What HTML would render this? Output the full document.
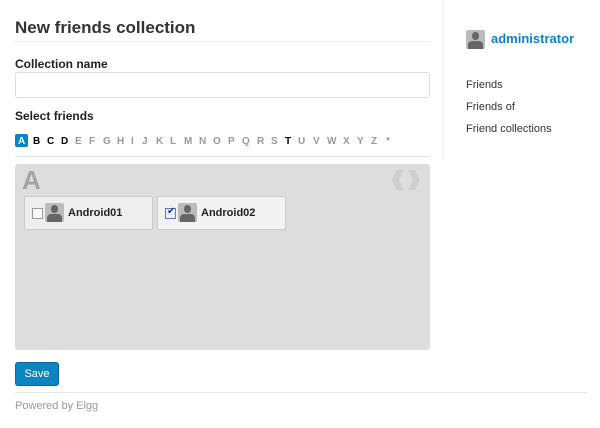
<!DOCTYPE html><html><head><style>
body{margin:0;width:600px;height:428px;background:#fff;font-family:"Liberation Sans",sans-serif;position:relative;overflow:hidden}
.a{position:absolute;white-space:nowrap}
.l{position:absolute;top:136px;font-size:10px;font-weight:bold;color:#999}
.av{position:absolute;background:#bbb;overflow:hidden;border-radius:2px}
.av:before{content:"";position:absolute;left:30%;top:12%;width:40%;height:42%;background:#666;border-radius:45%}
.av:after{content:"";position:absolute;left:12%;top:58%;width:76%;height:60%;background:#666;border-radius:30% 30% 0 0}
.card{position:absolute;top:196px;width:127px;height:32px;background:#eee;border:1px solid #ccc;border-radius:2px}
.cb{position:absolute;left:7px;top:11px;width:9px;height:9px;border:1px solid #999;background:#f8f8f8}
</style></head><body>
<div class="a" style="left:15px;top:18px;font-size:17px;font-weight:bold;color:#333">New friends collection</div>
<div class="a" style="left:15px;top:41px;width:415px;height:1px;background:#ebebeb"></div>
<div class="a" style="left:15px;top:57px;font-size:12px;font-weight:bold;color:#222">Collection name</div>
<div class="a" style="left:15px;top:72px;width:413px;height:24px;border:1px solid #ddd;border-radius:3px"></div>
<div class="a" style="left:15px;top:109px;font-size:12px;font-weight:bold;color:#222">Select friends</div>
<div class="a" style="left:15px;top:134px;width:13px;height:13px;background:#0a85c2;border-radius:2px"></div>
<span class="l" style="left:18px;color:#fff">A</span><span class="l" style="left:33px;color:#000">B</span><span class="l" style="left:47px;color:#000">C</span><span class="l" style="left:61px;color:#000">D</span><span class="l" style="left:75px">E</span><span class="l" style="left:89px">F</span><span class="l" style="left:103px">G</span><span class="l" style="left:117px">H</span><span class="l" style="left:131px">I</span><span class="l" style="left:142px">J</span><span class="l" style="left:156px">K</span><span class="l" style="left:170px">L</span><span class="l" style="left:184px">M</span><span class="l" style="left:199px">N</span><span class="l" style="left:213px">O</span><span class="l" style="left:228px">P</span><span class="l" style="left:242px">Q</span><span class="l" style="left:257px">R</span><span class="l" style="left:271px">S</span><span class="l" style="left:285px;color:#000">T</span><span class="l" style="left:298px">U</span><span class="l" style="left:313px">V</span><span class="l" style="left:327px">W</span><span class="l" style="left:343px">X</span><span class="l" style="left:357px">Y</span><span class="l" style="left:371px">Z</span><span class="l" style="left:386px">*</span>
<div class="a" style="left:15px;top:156px;width:415px;height:1px;background:#e5e5e5"></div>
<div class="a" style="left:15px;top:164px;width:415px;height:186px;background:#ddd;border-radius:3px"></div>
<div class="a" style="left:22px;top:165px;font-size:26px;font-weight:bold;color:#a4a4a4">A</div>
<svg class="a" style="left:390px;top:170px" width="32" height="20"><path d="M7 0h7l-5 10 5 10h-7l-5-10z M18 0h7l5 10-5 10h-7l5-10z" fill="#cfcfcf"/></svg>
<div class="card" style="left:24px"><div class="cb"></div><div class="av" style="left:20px;top:6px;width:19px;height:19px"></div><div class="a" style="left:43px;top:10px;font-size:11px;font-weight:bold;color:#222">Android01</div></div>
<div class="card" style="left:157px;background:#f2f2f2"><div class="cb" style="border-color:#5a7dae;background:#e8f0fb"><span class="a" style="left:1px;top:-3px;font-size:10px;color:#1a3a8a">✔</span></div><div class="av" style="left:20px;top:6px;width:19px;height:19px"></div><div class="a" style="left:43px;top:10px;font-size:11px;font-weight:bold;color:#222">Android02</div></div>
<div class="a" style="left:15px;top:362px;width:42px;height:22px;background:#0a85c2;border:1px solid #07699b;border-radius:3px;color:#fff;font-size:11px;line-height:22px;text-align:center">Save</div>
<div class="a" style="left:15px;top:392px;width:572px;height:1px;background:#e5e5e5"></div>
<div class="a" style="left:15px;top:400px;font-size:11px;color:#999">Powered by Elgg</div>
<div class="a" style="left:443px;top:0;width:1px;height:160px;background:#eee"></div>
<div class="av" style="left:466px;top:30px;width:19px;height:19px"></div>
<div class="a" style="left:491px;top:31px;font-size:13px;font-weight:bold;color:#0a85c2">administrator</div>
<div class="a" style="left:466px;top:79px;font-size:11px;color:#333">Friends</div>
<div class="a" style="left:466px;top:101px;font-size:11px;color:#333">Friends of</div>
<div class="a" style="left:466px;top:123px;font-size:11px;color:#333">Friend collections</div>
</body></html>
